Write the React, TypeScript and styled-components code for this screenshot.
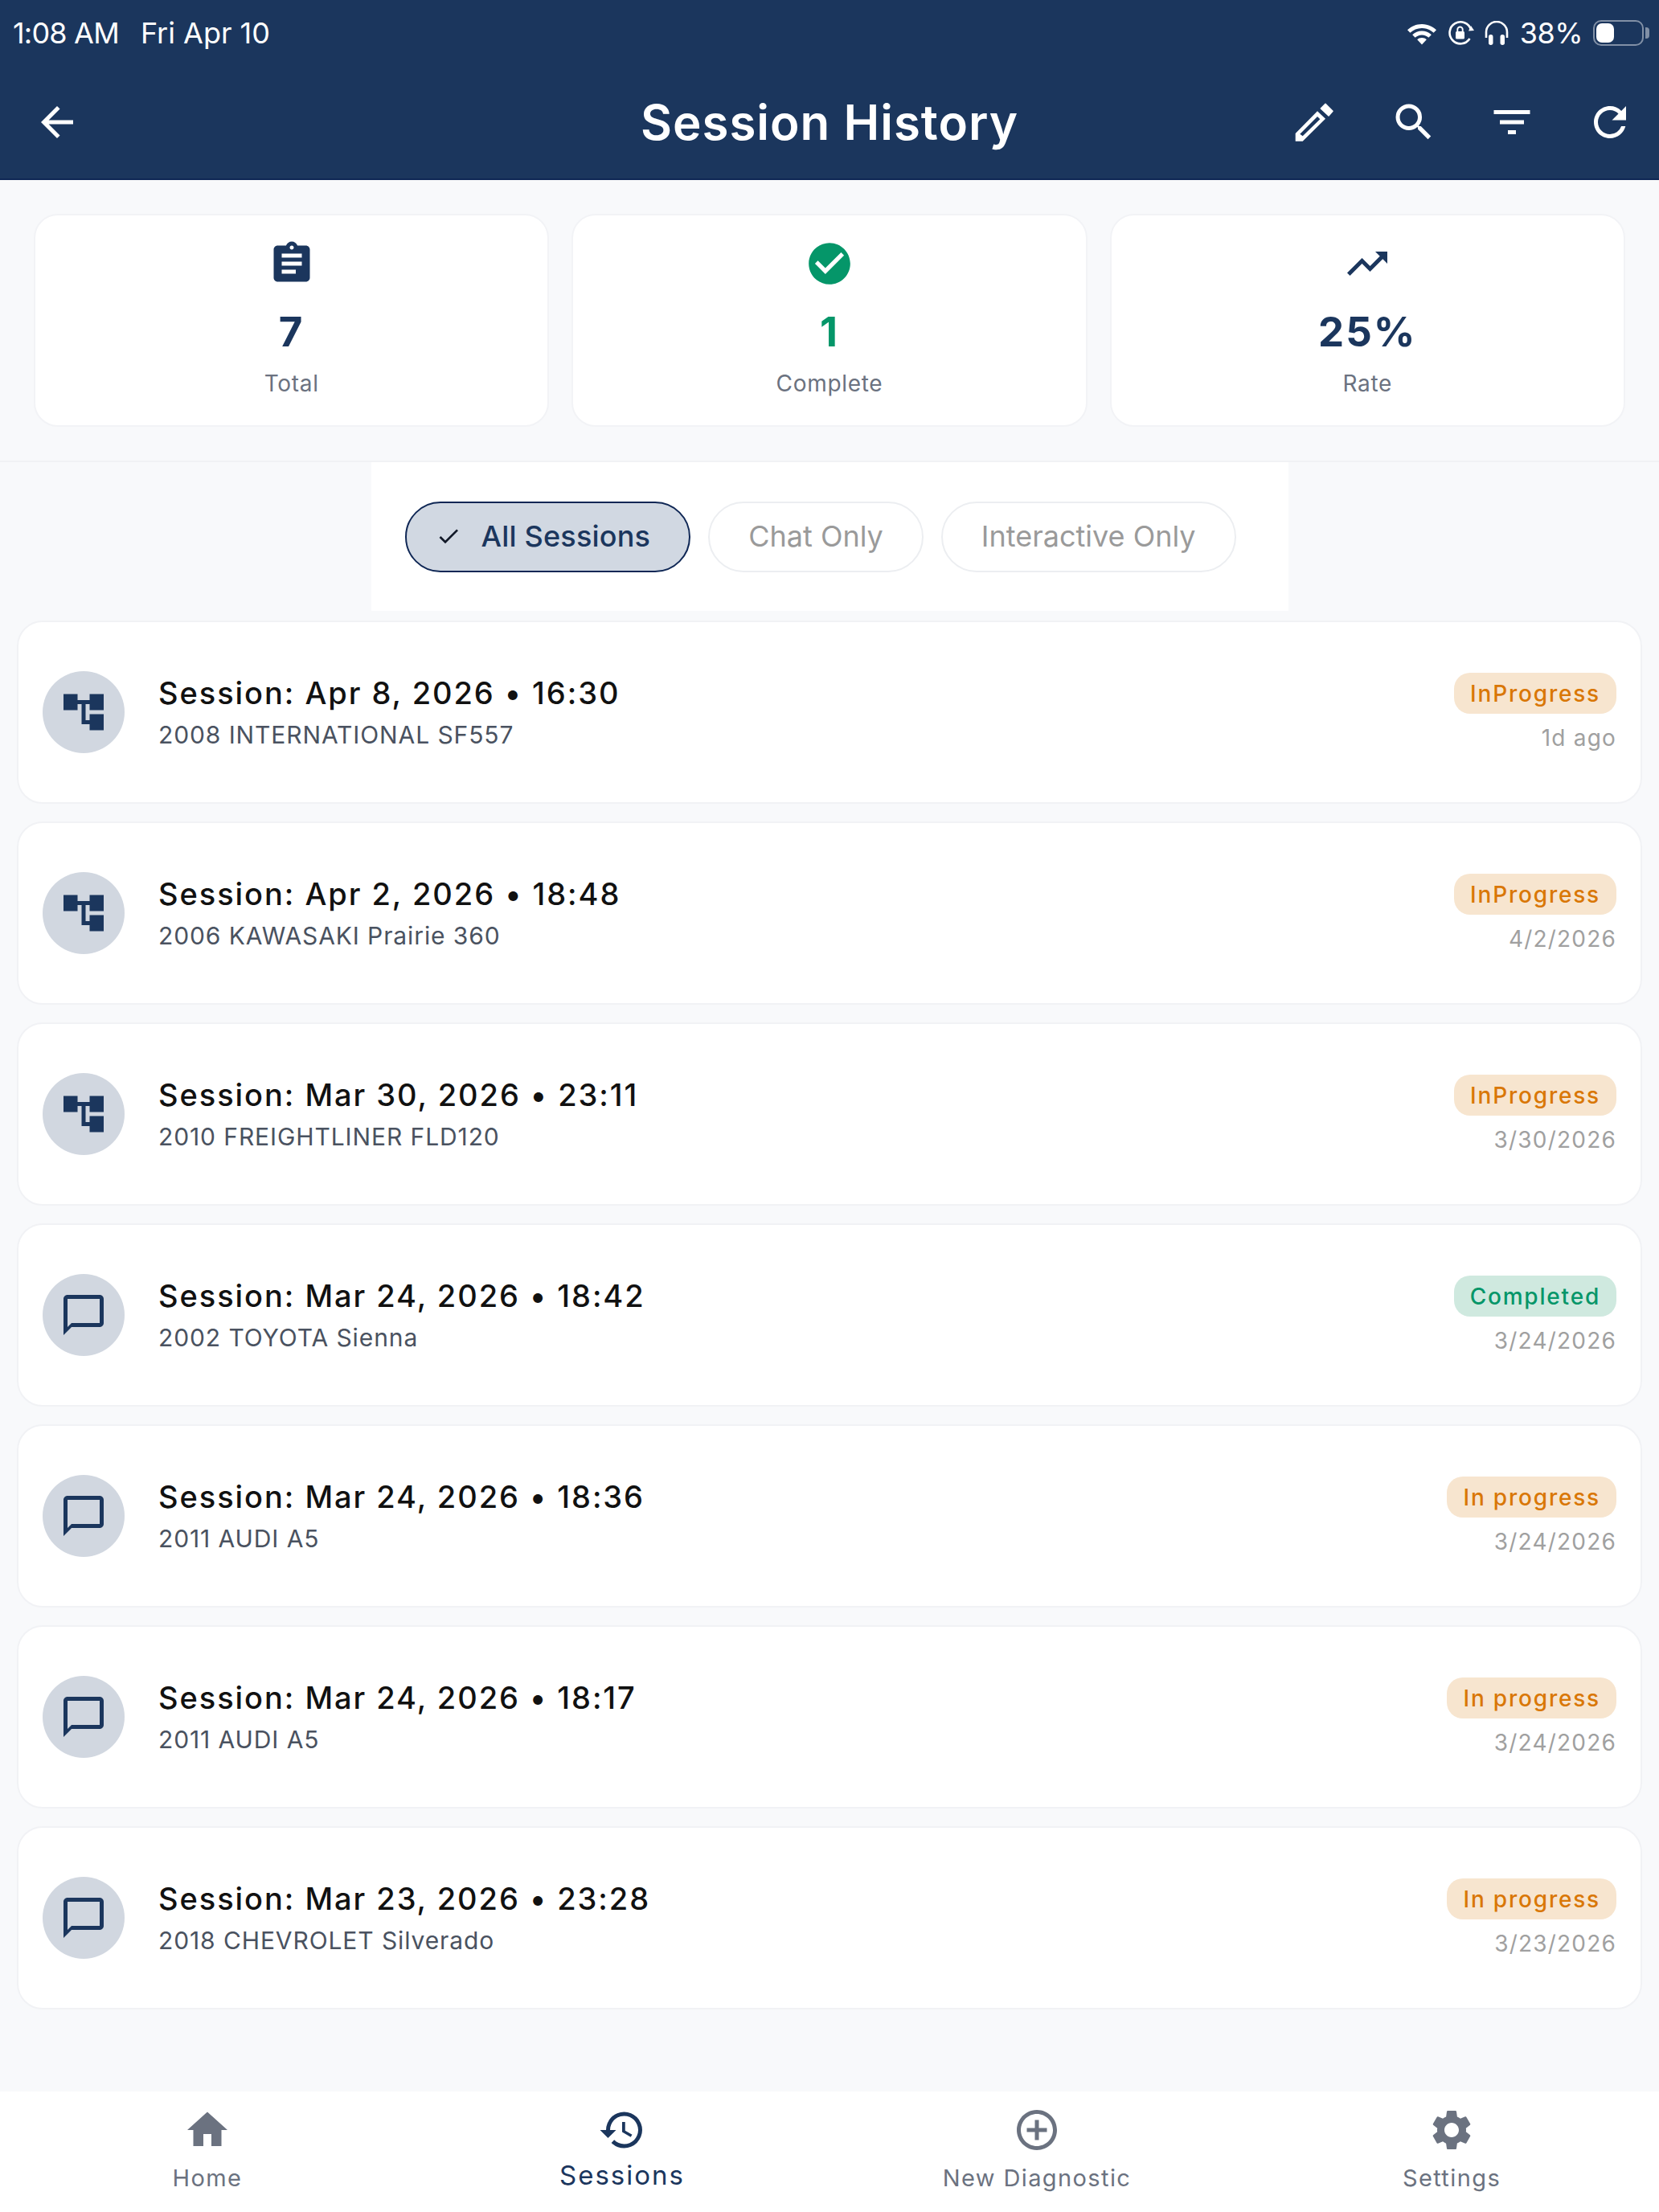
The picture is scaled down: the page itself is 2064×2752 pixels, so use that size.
import React from 'react'
import styled, { createGlobalStyle } from 'styled-components'
import {
  MdAccountTree,
  MdAddCircleOutline,
  MdArrowBack,
  MdAssignment,
  MdChatBubbleOutline,
  MdCheck,
  MdCheckCircle,
  MdFilterList,
  MdHistory,
  MdHome,
  MdRefresh,
  MdSearch,
  MdSettings,
  MdTrendingUp,
} from 'react-icons/md'

const NAVY = '#1b365d'
const GREEN = '#059669'
const SLATE = '#6b7280'

const GlobalStyle = createGlobalStyle`
  html, body {
    margin: 0;
    padding: 0;
    background: #f8f9fb;
  }
  * {
    box-sizing: border-box;
  }
`

const sessions = [
  { title: 'Session: Apr 8, 2026 • 16:30', vehicle: '2008 INTERNATIONAL SF557', status: 'InProgress', date: '1d ago', kind: 'tree' },
  { title: 'Session: Apr 2, 2026 • 18:48', vehicle: '2006 KAWASAKI Prairie 360', status: 'InProgress', date: '4/2/2026', kind: 'tree' },
  { title: 'Session: Mar 30, 2026 • 23:11', vehicle: '2010 FREIGHTLINER FLD120', status: 'InProgress', date: '3/30/2026', kind: 'tree' },
  { title: 'Session: Mar 24, 2026 • 18:42', vehicle: '2002 TOYOTA Sienna', status: 'Completed', date: '3/24/2026', kind: 'chat' },
  { title: 'Session: Mar 24, 2026 • 18:36', vehicle: '2011 AUDI A5', status: 'In progress', date: '3/24/2026', kind: 'chat' },
  { title: 'Session: Mar 24, 2026 • 18:17', vehicle: '2011 AUDI A5', status: 'In progress', date: '3/24/2026', kind: 'chat' },
  { title: 'Session: Mar 23, 2026 • 23:28', vehicle: '2018 CHEVROLET Silverado', status: 'In progress', date: '3/23/2026', kind: 'chat' },
]

const WifiIcon = () => (
  <svg width="38" height="30" viewBox="0 0 38 30" fill="#fff">
    <path d="M19 4C12 4 5.800 6.800 1 11.200l3.400 3.600C8.200 11.300 13.300 9 19 9s10.800 2.300 14.600 5.800l3.400-3.600C32.200 6.800 26 4 19 4z" />
    <path d="M19 12.500c-4.600 0-8.700 1.800-11.800 4.700l3.400 3.600c2.200-2 5.100-3.300 8.400-3.300s6.200 1.300 8.400 3.300l3.400-3.600c-3.100-2.900-7.200-4.700-11.800-4.700z" />
    <path d="M19 21c-2.300 0-4.300.9-5.800 2.300L19 29.500l5.800-6.200C23.300 21.900 21.300 21 19 21z" />
  </svg>
)

const RotationLockIcon = () => (
  <svg width="33" height="32" viewBox="0 0 33 32" fill="none">
    <path d="M27.500 23A13.500 13.500 0 1 1 29 12" stroke="#fff" strokeWidth="2.600" />
    <path d="M33 13l-7 .4 3-6.400z" fill="#fff" />
    <rect x="10" y="14" width="11" height="9.500" rx="1.500" fill="#fff" />
    <path d="M12.300 14v-2.300a3.200 3.200 0 0 1 6.400 0V14" stroke="#fff" strokeWidth="1.900" />
  </svg>
)

const HeadphonesIcon = () => (
  <svg width="30" height="30" viewBox="0 0 30 30" fill="#fff">
    <path d="M2 21v-7a13 13 0 0 1 26 0v7" fill="none" stroke="#fff" strokeWidth="2.600" />
    <rect x="5" y="17" width="5.500" height="13" rx="2.700" />
    <rect x="19.500" y="17" width="5.500" height="13" rx="2.700" />
  </svg>
)

const PencilIcon = () => (
  <svg width="60" height="60" viewBox="2 -2 60 60" fill="#fff">
    <path d="M44 5.300l9 9-5 5.700-9.700-9z" stroke="#fff" strokeWidth="1.500" strokeLinejoin="round" />
    <path
      fillRule="evenodd"
      d="M34 14.300l10 9.400-28.300 28H6.700V42zM34 21l3.300 3.300-21.600 21-3.400-2.600z"
    />
  </svg>
)

const App = () => {
  return (
    <Screen>
      <GlobalStyle />
      <Header>
        <StatusBar>
          <StatusClock>
            <span>1:08 AM</span>
            <StatusDate>Fri Apr 10</StatusDate>
          </StatusClock>
          <StatusIcons>
            <WifiIcon />
            <RotationLockIcon />
            <HeadphonesIcon />
            <BatteryText>38%</BatteryText>
            <Battery>
              <BatteryFill />
            </Battery>
          </StatusIcons>
        </StatusBar>
        <Toolbar>
          <BackButton>
            <MdArrowBack size={60} />
          </BackButton>
          <ScreenTitle>Session History</ScreenTitle>
          <ToolbarActions>
            <ActionButton><PencilIcon /></ActionButton>
            <ActionButton><MdSearch size={60} /></ActionButton>
            <ActionButton><MdFilterList size={60} /></ActionButton>
            <ActionButton><MdRefresh size={60} /></ActionButton>
          </ToolbarActions>
        </Toolbar>
      </Header>

      <StatsBar>
        <StatCard>
          <StatIcon><MdAssignment size={60} color={NAVY} /></StatIcon>
          <StatValue>7</StatValue>
          <StatLabel>Total</StatLabel>
        </StatCard>
        <StatCard>
          <StatIcon><MdCheckCircle size={62} color={GREEN} /></StatIcon>
          <StatValue $color={GREEN}>1</StatValue>
          <StatLabel>Complete</StatLabel>
        </StatCard>
        <StatCard>
          <StatIcon><MdTrendingUp size={60} color={NAVY} /></StatIcon>
          <StatValue>25%</StatValue>
          <StatLabel>Rate</StatLabel>
        </StatCard>
      </StatsBar>

      <FilterBox>
        <Chip $active>
          <MdCheck size={32} />
          <span>All Sessions</span>
        </Chip>
        <Chip>Chat Only</Chip>
        <Chip>Interactive Only</Chip>
      </FilterBox>

      <SessionList>
        {sessions.map((s) => (
          <SessionCard key={s.title}>
            <IconCircle>
              {s.kind === 'tree' ? <MdAccountTree size={60} /> : <MdChatBubbleOutline size={60} />}
            </IconCircle>
            <SessionInfo>
              <SessionTitle>{s.title}</SessionTitle>
              <SessionVehicle>{s.vehicle}</SessionVehicle>
            </SessionInfo>
            <SessionMeta>
              <StatusBadge $done={s.status === 'Completed'}>{s.status}</StatusBadge>
              <SessionDate>{s.date}</SessionDate>
            </SessionMeta>
          </SessionCard>
        ))}
      </SessionList>

      <TabBar>
        <Tab>
          <MdHome size={60} />
          <TabLabel>Home</TabLabel>
        </Tab>
        <Tab $active>
          <MdHistory size={60} />
          <TabLabel $active>Sessions</TabLabel>
        </Tab>
        <Tab>
          <MdAddCircleOutline size={60} />
          <TabLabel>New Diagnostic</TabLabel>
        </Tab>
        <Tab>
          <MdSettings size={60} />
          <TabLabel>Settings</TabLabel>
        </Tab>
      </TabBar>
    </Screen>
  )
}

export default App

const Screen = styled.div`
  width: 2064px;
  height: 2752px;
  display: flex;
  flex-direction: column;
  overflow: hidden;
  background: #f8f9fb;
  font-family: Inter, 'Noto Sans', sans-serif;
`

const Header = styled.header`
  height: 224px;
  flex-shrink: 0;
  display: flex;
  flex-direction: column;
  background: ${NAVY};
  border-bottom: 2px solid #0f2755;
  color: #fff;
`

const StatusBar = styled.div`
  height: 82px;
  padding: 0 19px 0 16px;
  display: flex;
  align-items: center;
  justify-content: space-between;
`

const StatusClock = styled.div`
  display: flex;
  gap: 27px;
  font-size: 36px;
  letter-spacing: -0.8px;
`

const StatusDate = styled.span`
  letter-spacing: 0;
`

const StatusIcons = styled.div`
  display: flex;
  align-items: center;
  gap: 13px;
`

const BatteryText = styled.span`
  margin-left: 1px;
  font-size: 36px;
  letter-spacing: -0.5px;
`

const Battery = styled.div`
  position: relative;
  width: 63px;
  height: 32px;
  padding: 2px;
  border: 2px solid rgba(255, 255, 255, 0.45);
  border-radius: 10px;

  &::after {
    content: '';
    position: absolute;
    right: -9px;
    top: 7px;
    width: 5px;
    height: 14px;
    border-radius: 0 4px 4px 0;
    background: rgba(255, 255, 255, 0.45);
  }
`

const BatteryFill = styled.div`
  width: 22px;
  height: 100%;
  border-radius: 7px;
  background: #fff;
`

const Toolbar = styled.div`
  flex: 1;
  display: grid;
  grid-template-columns: 1fr auto 1fr;
  align-items: center;
`

const BackButton = styled.div`
  padding-left: 41px;
  display: flex;
`

const ScreenTitle = styled.h1`
  margin: 0;
  font-size: 60px;
  font-weight: 600;
  letter-spacing: 1px;
`

const ToolbarActions = styled.div`
  display: flex;
  justify-content: flex-end;
`

const ActionButton = styled.div`
  width: 122px;
  display: flex;
  justify-content: center;
`

const StatsBar = styled.section`
  flex-shrink: 0;
  display: grid;
  grid-template-columns: repeat(3, 1fr);
  gap: 28px;
  padding: 42px;
  border-bottom: 2px solid #f1f2f5;
`

const StatCard = styled.div`
  height: 265px;
  padding-top: 30px;
  display: flex;
  flex-direction: column;
  align-items: center;
  background: #fff;
  border: 2px solid #f2f3f6;
  border-radius: 30px;
`

const StatIcon = styled.div`
  height: 60px;
  display: flex;
  align-items: center;
  justify-content: center;
`

const StatValue = styled.div<{ $color?: string }>`
  margin-top: 25px;
  font-size: 51px;
  line-height: 60px;
  font-weight: 700;
  letter-spacing: 2px;
  color: ${(p) => p.$color || NAVY};
`

const StatLabel = styled.div`
  margin-top: 16px;
  font-size: 28px;
  line-height: 36px;
  letter-spacing: 0.7px;
  color: ${SLATE};
`

const FilterBox = styled.div`
  width: 1141px;
  height: 185px;
  flex-shrink: 0;
  align-self: center;
  display: flex;
  align-items: center;
  gap: 22px;
  padding: 0 42px;
  background: #fff;
`

const Chip = styled.div<{ $active?: boolean }>`
  height: 88px;
  padding: ${(p) => (p.$active ? '0 48px 2px 36px' : '0 48px 2px')};
  display: flex;
  align-items: center;
  gap: 25px;
  border-radius: 44px;
  border: 2px solid ${(p) => (p.$active ? '#0f2755' : '#eceef1')};
  background: ${(p) => (p.$active ? '#d1d8e2' : '#fff')};
  color: ${(p) => (p.$active ? NAVY : '#9a9a9a')};
  font-size: 36px;
  font-weight: ${(p) => (p.$active ? 500 : 400)};
  letter-spacing: ${(p) => (p.$active ? '0.2px' : '0')};
  white-space: nowrap;

  svg {
    color: #111827;
  }
`

const SessionList = styled.main`
  flex: 1;
  display: flex;
  flex-direction: column;
  gap: 22px;
  padding: 12px 21px 0;
`

const SessionCard = styled.article`
  height: 228px;
  flex-shrink: 0;
  display: flex;
  align-items: center;
  padding: 0 30px;
  background: #fff;
  border: 2px solid #f1f2f5;
  border-radius: 32px;
`

const IconCircle = styled.div`
  width: 102px;
  height: 102px;
  flex-shrink: 0;
  display: flex;
  align-items: center;
  justify-content: center;
  border-radius: 50%;
  background: #d1d7e0;
  color: ${NAVY};
`

const SessionInfo = styled.div`
  flex: 1;
  margin-left: 42px;
  display: flex;
  flex-direction: column;
  gap: 8px;
`

const SessionTitle = styled.div`
  font-size: 38px;
  line-height: 48px;
  font-weight: 500;
  letter-spacing: 1.95px;
  color: #111;
`

const SessionVehicle = styled.div`
  font-size: 30px;
  line-height: 40px;
  letter-spacing: 0.9px;
  color: #4a5260;
`

const SessionMeta = styled.div`
  display: flex;
  flex-direction: column;
  align-items: flex-end;
  gap: 13px;
`

const StatusBadge = styled.div<{ $done?: boolean }>`
  height: 51px;
  padding: 0 20px;
  display: flex;
  align-items: center;
  border-radius: 20px;
  font-size: 28px;
  font-weight: 500;
  letter-spacing: 1.8px;
  background: ${(p) => (p.$done ? '#cfe9df' : '#f7e5cf')};
  color: ${(p) => (p.$done ? GREEN : '#d97706')};
`

const SessionDate = styled.div`
  font-size: 28px;
  line-height: 34px;
  letter-spacing: 1.2px;
  color: #a0a0a0;
`

const TabBar = styled.nav`
  height: 150px;
  flex-shrink: 0;
  display: grid;
  grid-template-columns: repeat(4, 1fr);
  background: #fff;
`

const Tab = styled.div<{ $active?: boolean }>`
  display: flex;
  flex-direction: column;
  align-items: center;
  padding-top: 18px;
  color: ${(p) => (p.$active ? NAVY : SLATE)};
`

const TabLabel = styled.span<{ $active?: boolean }>`
  margin-top: ${(p) => (p.$active ? '6px' : '10px')};
  font-size: ${(p) => (p.$active ? '33px' : '29px')};
  line-height: 40px;
  letter-spacing: ${(p) => (p.$active ? '2px' : '1.4px')};
`
